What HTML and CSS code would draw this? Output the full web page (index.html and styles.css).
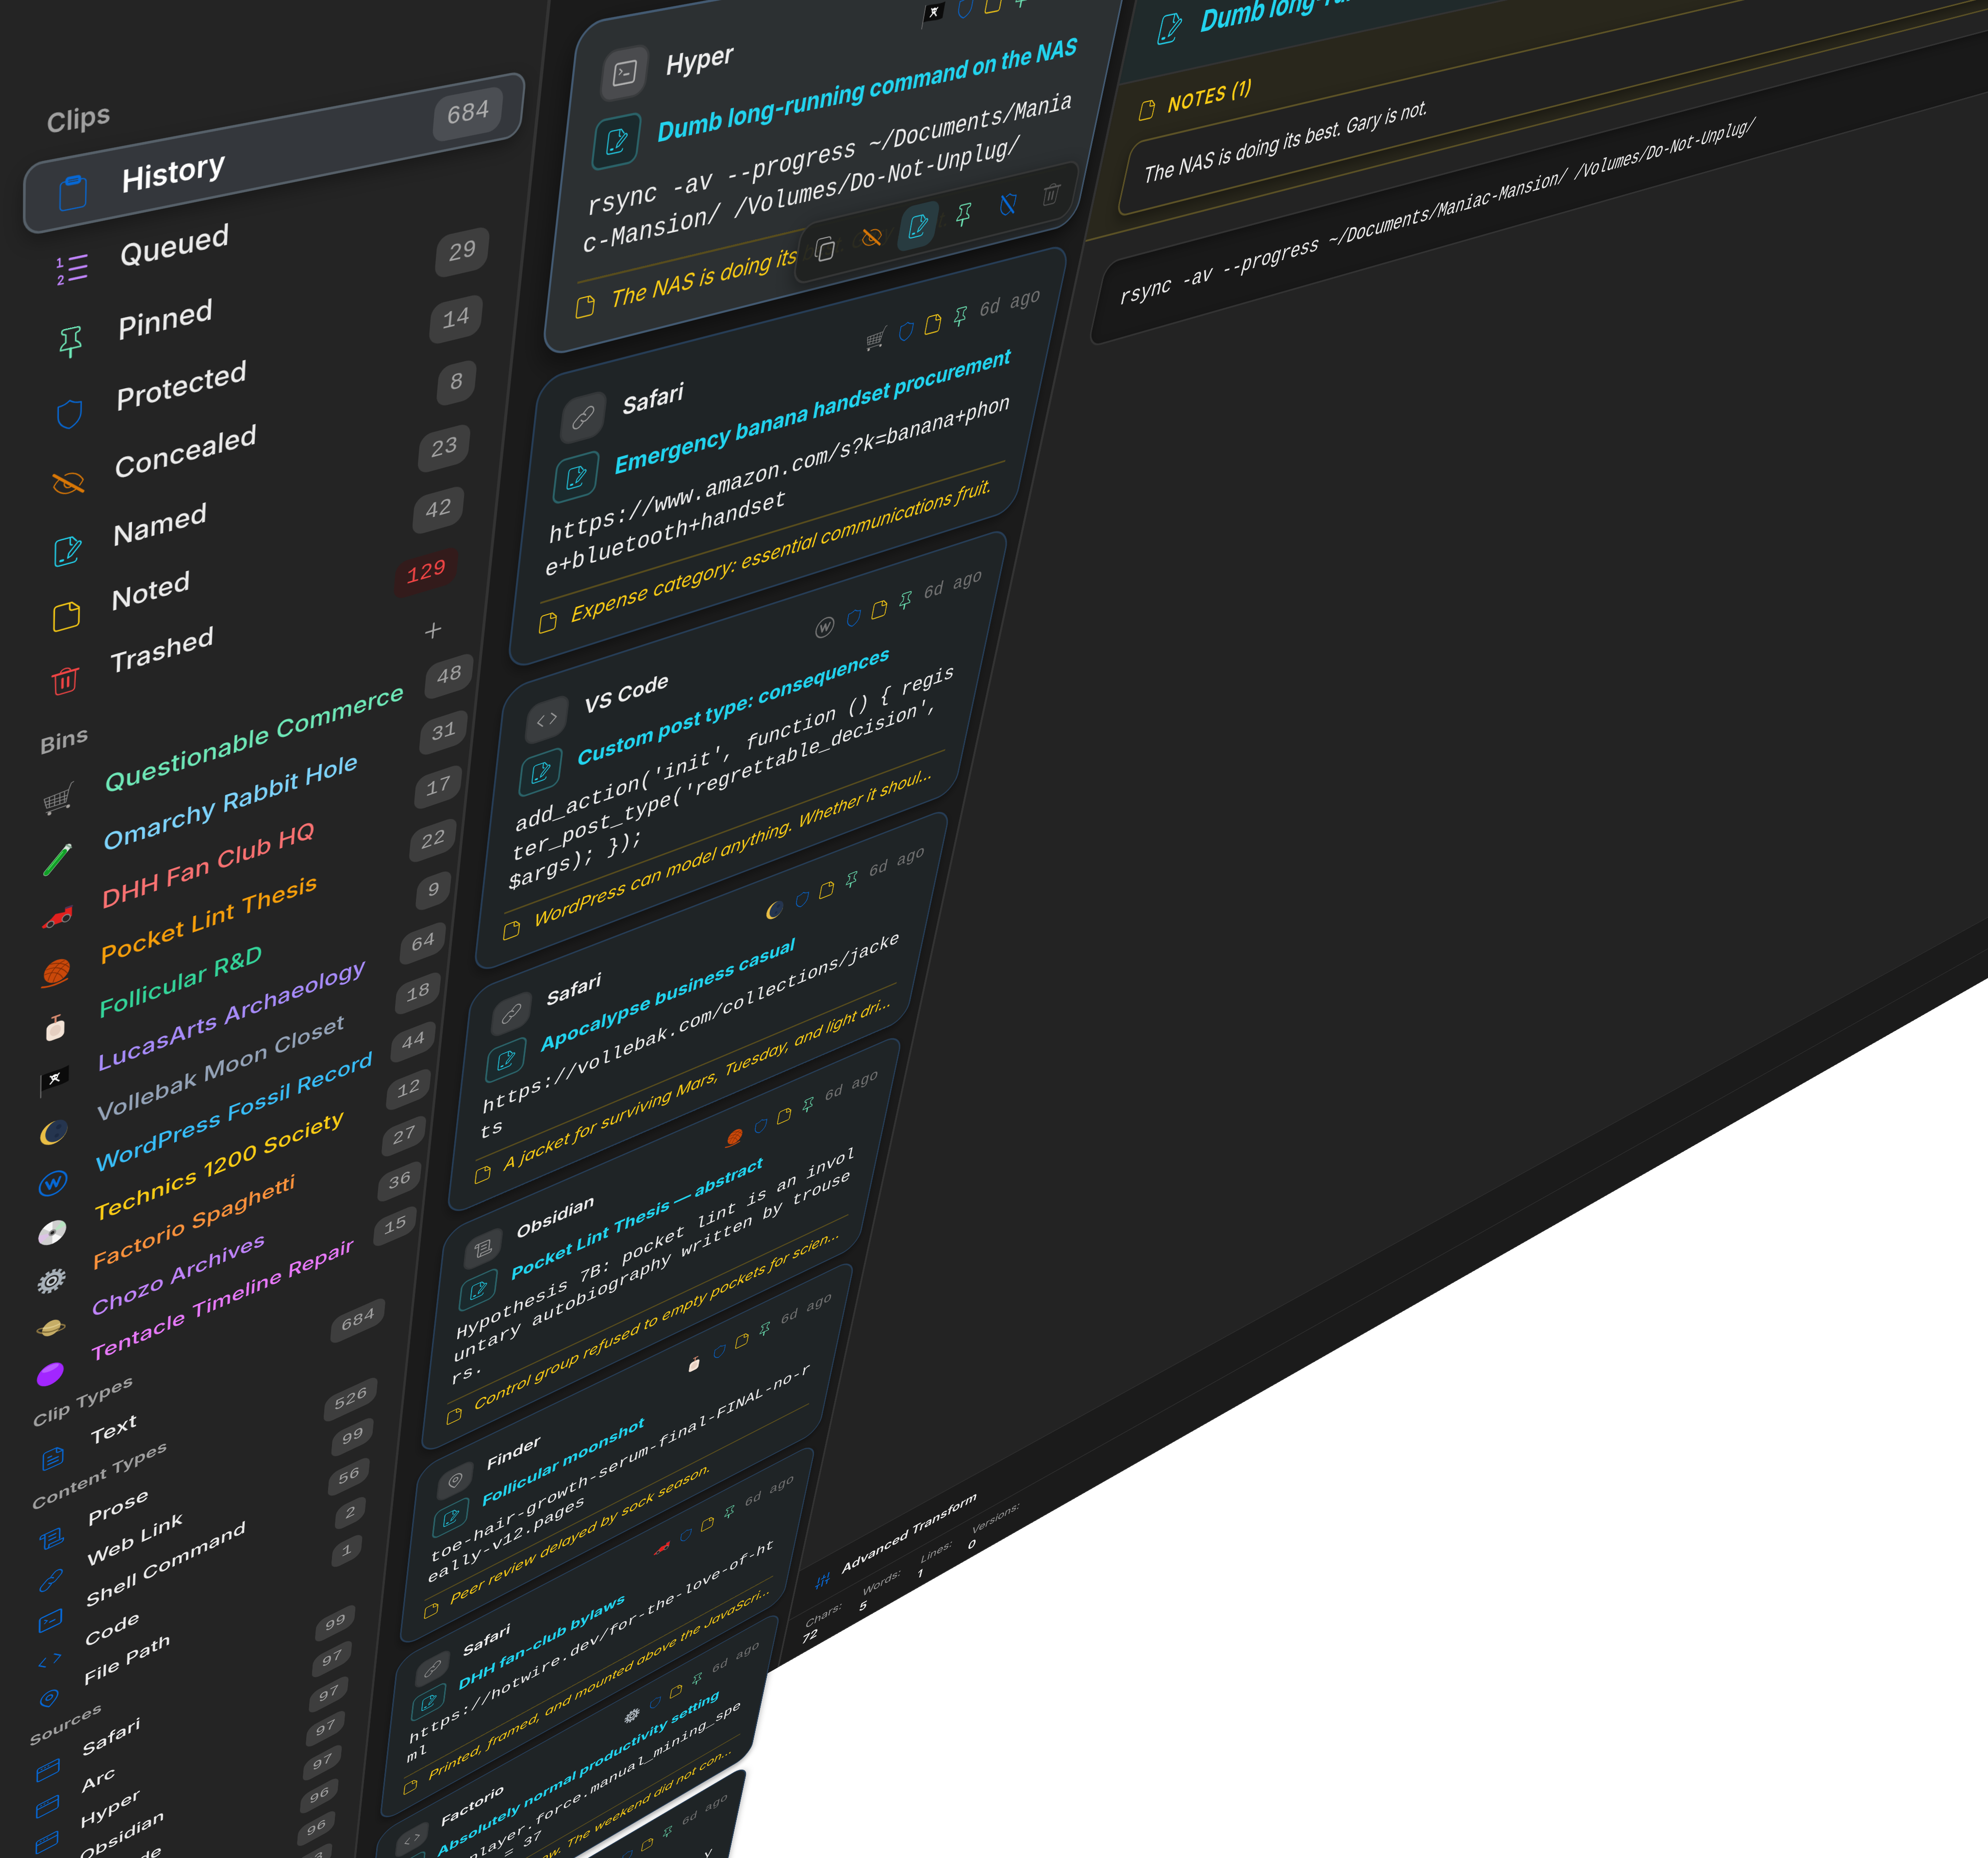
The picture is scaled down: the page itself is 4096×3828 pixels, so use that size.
FILE: index.html
```html
<!DOCTYPE html>
<html lang="en">
<head>
<meta charset="utf-8">
<title>Clipboard history</title>
<link rel="stylesheet" href="styles.css">
</head>
<body>
<svg class="defs" aria-hidden="true">
  <symbol id="clipboard" viewBox="0 0 16 16"><rect x="2.2" y="2.6" width="11.6" height="12.6" rx="1.600" stroke-width=".55"/><rect x="5.1" y="1.3" width="5.8" height="2.6" rx=".8" stroke-width="1.3"/></symbol>
  <symbol id="queue" viewBox="0 0 16 16"><path d="M7 3.2h7.6M7 8h7.6M7 12.6h7.6" stroke-width="1.1"/><path d="M2.4 5.5V2l-.9.5M1.4 5.7h2.4M2 11c.3-1.300 2.200-1.100 1.900.2-.2.9-1.500 1.700-2.100 2.600h2.300" stroke-width=".7"/></symbol>
  <symbol id="pin" viewBox="0 0 16 16"><path d="M5 1.2h6c1.6 0 1.6 2.2 0 2.3l-.7.4v3.6c1.6.8 2.4 1.8 2.4 3.2H3.3c0-1.4.8-2.4 2.4-3.2V3.9L5 3.5C3.4 3.4 3.4 1.2 5 1.2z" stroke-width=".7"/><path d="M8 10.7v4.1" stroke-width="1.2"/></symbol>
  <symbol id="shield" viewBox="0 0 16 16"><path d="M8 1.3c1.6 1.4 3.4 1.9 5.4 1.9v4.6c0 3.2-2 5.600-5.400 7-3.400-1.400-5.400-3.800-5.400-7V3.2C4.6 3.2 6.4 2.7 8 1.3z" stroke-width=".65"/></symbol>
  <symbol id="shield-off" viewBox="0 0 16 16"><path d="M5.500 2.700L8 1.300c1.600 1.400 3.400 1.900 5.400 1.900v4.600c0 .8-.1 1.500-.4 2.200M2.600 4v3.800c0 3.200 2 5.600 5.400 7 1.300-.5 2.500-1.300 3.400-2.200" stroke-width=".7"/><path d="M2 1.800l12 12.600" stroke-width="1.400"/></symbol>
  <symbol id="eye-off" viewBox="0 0 16 16"><path d="M6.300 3.500C10 2.500 13.200 4.500 15 8c-.4.900-1 1.600-1.600 2.300M3.600 4.900C2.500 5.700 1.600 6.700 1 8c2.200 4.400 6.600 5.900 10.400 4M6.300 6.800c-1.100 2 1 4 2.900 3" stroke-width=".6"/><path d="M1 2.200l14 11.600" stroke-width="1.400"/></symbol>
  <symbol id="named" viewBox="0 0 16 16"><path d="M12.400 4L10.200 1.400H4C2.700 1.400 2.200 2 2.200 3.200v9.600c0 1.200.5 1.800 1.800 1.800h6.800c1.200 0 1.800-.5 1.800-1.600M9.300 1.500v3c0 .6.400 1 1 1" stroke-width=".65"/><path d="M8.200 11.700l.5-2.300 4.200-4.600c1-.8 2.200.3 1.400 1.400L10 10.900z" stroke-width=".65"/><path d="M4.700 12.200h1.200" stroke-width="1.200"/></symbol>
  <symbol id="note" viewBox="0 0 16 16"><path d="M3.800 1.500h6.800L14.200 5v7.700c0 1.200-.5 1.800-1.700 1.800H3.800c-1.300 0-1.800-.5-1.800-1.800V3.300c0-1.300.5-1.800 1.800-1.800zM9.600 1.700v2.500c0 1 .4 1.400 1.300 1.400H14" stroke-width=".75"/></symbol>
  <symbol id="trash" viewBox="0 0 16 16"><path d="M3 3.900l.3 9.400c.1 1 .6 1.500 1.600 1.500h6.200c1 0 1.500-.5 1.600-1.500l.3-9.400M5.500 3.500C5.600 1 10.400 1 10.500 3.500" stroke-width=".65"/><path d="M1.600 3.800h12.800M6.600 6.800v4.800M9.400 6.800v4.800" stroke-width="1.200"/></symbol>
  <symbol id="link" viewBox="0 0 16 16"><path d="M7.900 4.800l2-2.100a2.800 2.800 0 0 1 4 4l-3 3a2.800 2.800 0 0 1-4.300-.4M8.100 11.200l-2 2.100a2.800 2.800 0 0 1-4-4l3-3a2.800 2.800 0 0 1 4.300.4" stroke-width=".8"/></symbol>
  <symbol id="code" viewBox="0 0 16 16"><path d="M5.200 4.200L1.200 8l4 3.800M10.800 4.200l4 3.800-4 3.800" stroke-width=".85"/></symbol>
  <symbol id="shell" viewBox="0 0 16 16"><rect x="1.300" y="2" width="13.400" height="12" rx="1.300" stroke-width="1.100"/><path d="M4.300 5.200l1.700 1.500-1.700 1.500" stroke-width=".7"/><path d="M7.600 8.800h3" stroke-width="1.100"/></symbol>
  <symbol id="scroll" viewBox="0 0 16 16"><path d="M3.800 10.500V3.300C3.800 1 .9 1 .9 3.200v1h2.700M2.500 1.700h8.700c1.200 0 1.600.6 1.600 1.700v7M6.300 11.500h8.800v.9c0 1.300-.7 1.900-1.700 1.900H5.200c-1.200 0-1.600-.8-1.500-3.800M6.300 11.500c.2 1.700-.2 2.800-1.200 2.800" stroke-width=".85"/><path d="M6.300 5h4M6.300 8h4" stroke-width="1"/></symbol>
  <symbol id="place" viewBox="0 0 16 16"><path d="M8 14.800C4.500 11.800 2.600 9.400 2.600 6.700a5.400 5.400 0 0 1 10.800 0c0 2.700-1.900 5.100-5.400 8.100z" stroke-width=".95"/><circle cx="8" cy="6.700" r="2" stroke-width=".95"/></symbol>
  <symbol id="doc" viewBox="0 0 16 16"><path d="M4 1.200h6.200L13.800 5v8c0 1.300-.5 1.800-1.700 1.800H4c-1.300 0-1.800-.5-1.800-1.800V3c0-1.300.5-1.800 1.800-1.800zM10 1.400V4c0 .9.300 1.200 1.200 1.200h2.400" stroke-width=".8"/><path d="M5 6h2M5 8.800h6M5 11.500h6" stroke-width="1"/></symbol>
  <symbol id="window" viewBox="0 0 16 16"><rect x="1" y="2" width="14" height="12" rx="1.300" stroke-width=".95"/><path d="M1.300 6h13.400M3.600 4h.3M5.800 4h.3M8 4h.3" stroke-width="1"/></symbol>
  <symbol id="copy" viewBox="0 0 16 16"><rect x="5.200" y="5" width="9.400" height="10" rx="1.500" stroke-width="1.100"/><path d="M3.400 11.600c-1.200 0-1.900-.5-1.900-1.700V2.800c0-1.200.6-1.800 1.800-1.800h6.200c1.200 0 1.900.6 1.900 1.800" stroke-width=".65"/></symbol>
  <symbol id="sliders" viewBox="0 0 16 16"><path d="M3 1.500v6M3 14.500v-4M1 10.500h4M8 1.500v3.200M6 4.700h4M8 14.500V7.500M13 1.500v5.500M13 14.500V10M11 10h4" stroke-width="1.300"/></symbol>
  <symbol id="wp" viewBox="0 0 16 16"><circle cx="8" cy="8" r="7" stroke-width="1"/><path d="M4.400 5.600l1.900 5 1.700-5 1.700 5 1.900-5" stroke-width="1.300"/></symbol>

  <symbol id="cart" viewBox="0 0 16 16" stroke="none"><path d="M1 5.200l11.700-1.100-1.300 6.300H2.300zM12.700 4.100L13.900 1l1.100-.4M2 12.700l9.400-.4M1.200 6.900h11M1.600 8.600h10.300M3.500 5v5.400M6 4.800v5.600M8.500 4.600v5.800M10.700 4.400v6" stroke="#8c8c8c" stroke-width=".42"/><circle cx="3.600" cy="13.800" r=".9" fill="#a5a19d"/><circle cx="12.500" cy="13" r=".9" fill="#a5a19d"/></symbol>
  <symbol id="tube" viewBox="0 0 16 16" stroke="none"><path d="M12.900 3L2.600 13.600" stroke="#d7e4dc" stroke-width="3.100"/><path d="M11 5L2.600 13.600" stroke="#119e27" stroke-width="2.700"/><path d="M10.300 4.900l-7 7.200" stroke="#54dd64" stroke-width=".5"/><path d="M12 1.700l2.400 2.300" stroke="#80a38b" stroke-width=".8"/></symbol>
  <symbol id="car" viewBox="0 0 16 16" stroke="none"><path d="M.5 10.700L5.200 8l2-1.900 4.700.7V4.300h3.400v6l-4 1.500-10 .2z" fill="#e1201e"/><circle cx="4.800" cy="11" r="1.700" fill="#252525" stroke="#8b8b8b" stroke-width=".5"/><circle cx="12.500" cy="10.500" r="2" fill="#252525" stroke="#8b8b8b" stroke-width=".5"/><path d="M12.300 4.700h3" stroke="#4b3357"/></symbol>
  <symbol id="yarn" viewBox="0 0 16 16" stroke="none"><circle cx="8.300" cy="7.200" r="6.400" fill="#c9480a"/><path d="M3 4.500c4-.5 8 1.500 10.500 6M2.300 7c4-.6 7.500 1.600 9 5.500M5 2c4 .5 7.500 2.500 9.300 5.500M4 11c1-4 4-8 8-8.300M6.500 13c1-4 4-7.500 7.400-8.300" stroke="#7c2a05" stroke-width=".4"/><path d="M1 13.700c4 1.500 9 1 12.500.2" stroke="#c9480a" stroke-width="1"/></symbol>
  <symbol id="lotion" viewBox="0 0 16 16" stroke="none"><rect x="3.500" y="5" width="9" height="10" rx="2.400" fill="#f3e3d6"/><ellipse cx="8" cy="9.800" rx="2.800" ry="3.100" fill="#e5cfc1"/><path d="M8 5V1.500M6.300 1.600h3.800" stroke="#d68a6f" stroke-width="1"/></symbol>
  <symbol id="flag" viewBox="0 0 16 16" stroke="none"><path d="M1.200 2.400c4-1 9 .8 14-.6v9.500c-5 1.400-10-.4-14 .5z" fill="#0b0b0b"/><path d="M1 2v13.500" stroke="#777" stroke-width=".5"/><path d="M5.800 4.600l4.400 4.600M10.200 4.600L5.800 9.200" stroke="#f0f0f0" stroke-width=".8"/><circle cx="8" cy="6" r="1.700" fill="#fff"/><circle cx="7.400" cy="6.100" r=".4" fill="#000"/><circle cx="8.700" cy="6.100" r=".4" fill="#000"/></symbol>
  <symbol id="moon" viewBox="0 0 16 16" stroke="none"><circle cx="8" cy="8" r="7" fill="#e8bd45"/><ellipse cx="9.300" cy="7.600" rx="5.700" ry="6.500" fill="#25354f"/><circle cx="10.500" cy="5.500" r="1.400" fill="#1c2a42"/><circle cx="9.500" cy="10.500" r="1.100" fill="#1c2a42"/></symbol>
  <symbol id="disc" viewBox="0 0 16 16" stroke="none"><circle cx="8" cy="8" r="7.300" fill="#cfcfcf"/><path d="M8 8L3 2.800A7.300 7.300 0 0 1 8 .7z" fill="#f6f6f6"/><path d="M8 8l5 5.200a7.300 7.300 0 0 1-5 2.100z" fill="#f6f6f6"/><path d="M8 8L.9 6.500A7.300 7.300 0 0 0 1.700 12z" fill="#dcc3e5"/><path d="M8 8l7.100-1.500A7.300 7.300 0 0 0 13 2.800z" fill="#b7e3c1"/><circle cx="8" cy="8" r="2" fill="#8f8f8f"/><circle cx="8" cy="8" r="1" fill="#242424"/></symbol>
  <symbol id="gear" viewBox="0 0 16 16" stroke="none"><circle cx="8" cy="8" r="6.600" stroke="#a9b2ba" stroke-width="1.800" stroke-dasharray="1.900 1.556" stroke-linecap="butt"/><circle cx="8" cy="8" r="4.700" stroke="#a9b2ba" stroke-width="2"/><circle cx="8" cy="8" r="2.200" stroke="#c6cdd3" stroke-width="1.300"/></symbol>
  <symbol id="planet" viewBox="0 0 16 16" stroke="none"><path d="M3.800 5.800C-2 3.500.3 8.800 8 11c8 2.200 10 0 4.800-3" stroke="#8a7340" stroke-width=".9"/><circle cx="8.200" cy="8" r="5" fill="#c6ad66"/><path d="M4 5.900c3 1.700 6 2 8.700 1.700" stroke="#ddc98a" stroke-width=".9"/><path d="M3.500 8.200c3 2.200 6.200 2.800 9.200 2.200" stroke="#7e6a36" stroke-width=".8"/></symbol>
  <symbol id="orb" viewBox="0 0 16 16" stroke="none"><circle cx="8" cy="8" r="7.300" fill="#a226ff"/><ellipse cx="8" cy="3.600" rx="4.600" ry="2" fill="#b85aff"/></symbol>
</svg>

<div class="stage">
 <div class="plane">
  <div class="window">

   <nav class="sidebar">
    <section class="group">
     <div class="group-head"><h2>Clips</h2></div>
     <a class="row active"><svg class="ico blue"><use href="#clipboard"/></svg><span>History</span><b class="count">684</b></a>
     <a class="row"><svg class="ico purple"><use href="#queue"/></svg><span>Queued</span></a>
     <a class="row"><svg class="ico mint"><use href="#pin"/></svg><span>Pinned</span><b class="count">29</b></a>
     <a class="row"><svg class="ico blue"><use href="#shield"/></svg><span>Protected</span><b class="count">14</b></a>
     <a class="row"><svg class="ico orange"><use href="#eye-off"/></svg><span>Concealed</span><b class="count">8</b></a>
     <a class="row"><svg class="ico cyan"><use href="#named"/></svg><span>Named</span><b class="count">23</b></a>
     <a class="row"><svg class="ico yellow"><use href="#note"/></svg><span>Noted</span><b class="count">42</b></a>
     <a class="row"><svg class="ico red"><use href="#trash"/></svg><span>Trashed</span><b class="count danger">129</b></a>
    </section>
    <section class="group bins">
     <div class="group-head"><h2>Bins</h2><svg class="plus" viewBox="0 0 10 10"><path d="M5 1v8M1 5h8"/></svg></div>
     <a class="row c-mint"><svg class="ico"><use href="#cart"/></svg><span>Questionable Commerce</span><b class="count">48</b></a>
     <a class="row c-sky"><svg class="ico"><use href="#tube"/></svg><span>Omarchy Rabbit Hole</span><b class="count">31</b></a>
     <a class="row c-rose"><svg class="ico"><use href="#car"/></svg><span>DHH Fan Club HQ</span><b class="count">17</b></a>
     <a class="row c-amber"><svg class="ico"><use href="#yarn"/></svg><span>Pocket Lint Thesis</span><b class="count">22</b></a>
     <a class="row c-green"><svg class="ico"><use href="#lotion"/></svg><span>Follicular R&amp;D</span><b class="count">9</b></a>
     <a class="row c-violet"><svg class="ico"><use href="#flag"/></svg><span>LucasArts Archaeology</span><b class="count">64</b></a>
     <a class="row c-slate"><svg class="ico"><use href="#moon"/></svg><span>Vollebak Moon Closet</span><b class="count">18</b></a>
     <a class="row c-blue"><svg class="ico blue"><use href="#wp"/></svg><span>WordPress Fossil Record</span><b class="count">44</b></a>
     <a class="row c-yellow"><svg class="ico"><use href="#disc"/></svg><span>Technics 1200 Society</span><b class="count">12</b></a>
     <a class="row c-orange"><svg class="ico"><use href="#gear"/></svg><span>Factorio Spaghetti</span><b class="count">27</b></a>
     <a class="row c-purple"><svg class="ico"><use href="#planet"/></svg><span>Chozo Archives</span><b class="count">36</b></a>
     <a class="row c-pink"><svg class="ico"><use href="#orb"/></svg><span>Tentacle Timeline Repair</span><b class="count">15</b></a>
    </section>
    <section class="group">
     <div class="group-head"><h2>Clip Types</h2></div>
     <a class="row"><svg class="ico blue"><use href="#doc"/></svg><span>Text</span><b class="count">684</b></a>
    </section>
    <section class="group">
     <div class="group-head"><h2>Content Types</h2></div>
     <a class="row"><svg class="ico blue"><use href="#scroll"/></svg><span>Prose</span><b class="count">526</b></a>
     <a class="row"><svg class="ico blue"><use href="#link"/></svg><span>Web Link</span><b class="count">99</b></a>
     <a class="row"><svg class="ico blue"><use href="#shell"/></svg><span>Shell Command</span><b class="count">56</b></a>
     <a class="row"><svg class="ico blue"><use href="#code"/></svg><span>Code</span><b class="count">2</b></a>
     <a class="row"><svg class="ico blue"><use href="#place"/></svg><span>File Path</span><b class="count">1</b></a>
    </section>
    <section class="group">
     <div class="group-head"><h2>Sources</h2></div>
     <a class="row"><svg class="ico blue"><use href="#window"/></svg><span>Safari</span><b class="count">99</b></a>
     <a class="row"><svg class="ico blue"><use href="#window"/></svg><span>Arc</span><b class="count">97</b></a>
     <a class="row"><svg class="ico blue"><use href="#window"/></svg><span>Hyper</span><b class="count">97</b></a>
     <a class="row"><svg class="ico blue"><use href="#window"/></svg><span>Obsidian</span><b class="count">97</b></a>
     <a class="row"><svg class="ico blue"><use href="#window"/></svg><span>VS Code</span><b class="count">97</b></a>
     <a class="row"><svg class="ico"></svg><span></span><b class="count">96</b></a>
     <a class="row"><svg class="ico"></svg><span></span><b class="count">96</b></a>
     <a class="row"><svg class="ico"></svg><span></span><b class="count">93</b></a>
    </section>
   </nav>

   <main class="list">
    <article class="card selected">
     <header><i class="tile"><svg><use href="#shell"/></svg></i><h3>Hyper</h3><div class="meta"><svg class="emoji"><use href="#flag"/></svg><svg class="blue"><use href="#shield"/></svg><svg class="yellow"><use href="#note"/></svg><svg class="mint"><use href="#pin"/></svg><time></time></div></header>
     <div class="title"><i class="tile named"><svg><use href="#named"/></svg></i><h4>Dumb long-running command on the NAS</h4></div>
     <pre>rsync -av --progress ~/Documents/Mania
c-Mansion/ /Volumes/Do-Not-Unplug/</pre>
     <footer><svg><use href="#note"/></svg><em>The NAS is doing its best. Gary is not.</em></footer>
     <div class="toolbar">
      <button><svg class="grey"><use href="#copy"/></svg></button>
      <button><svg class="orange"><use href="#eye-off"/></svg></button>
      <button class="on"><svg class="cyan"><use href="#named"/></svg></button>
      <button><svg class="mint"><use href="#pin"/></svg></button>
      <button><svg class="blue"><use href="#shield-off"/></svg></button>
      <button><svg class="dim"><use href="#trash"/></svg></button>
     </div>
    </article>
    <article class="card">
     <header><i class="tile"><svg><use href="#link"/></svg></i><h3>Safari</h3><div class="meta"><svg class="emoji"><use href="#cart"/></svg><svg class="blue"><use href="#shield"/></svg><svg class="yellow"><use href="#note"/></svg><svg class="mint"><use href="#pin"/></svg><time>6d ago</time></div></header>
     <div class="title"><i class="tile named"><svg><use href="#named"/></svg></i><h4>Emergency banana handset procurement</h4></div>
     <pre>https://www.amazon.com/s?k=banana+phon
e+bluetooth+handset</pre>
     <footer><svg><use href="#note"/></svg><em>Expense category: essential communications fruit.</em></footer>
    </article>
    <article class="card">
     <header><i class="tile"><svg><use href="#code"/></svg></i><h3>VS Code</h3><div class="meta"><svg class="emoji mute"><use href="#wp"/></svg><svg class="blue"><use href="#shield"/></svg><svg class="yellow"><use href="#note"/></svg><svg class="mint"><use href="#pin"/></svg><time>6d ago</time></div></header>
     <div class="title"><i class="tile named"><svg><use href="#named"/></svg></i><h4>Custom post type: consequences</h4></div>
     <pre>add_action('init', function () { regis
ter_post_type('regrettable_decision',
$args); });</pre>
     <footer><svg><use href="#note"/></svg><em>WordPress can model anything. Whether it shoul…</em></footer>
    </article>
    <article class="card">
     <header><i class="tile"><svg><use href="#link"/></svg></i><h3>Safari</h3><div class="meta"><svg class="emoji"><use href="#moon"/></svg><svg class="blue"><use href="#shield"/></svg><svg class="yellow"><use href="#note"/></svg><svg class="mint"><use href="#pin"/></svg><time>6d ago</time></div></header>
     <div class="title"><i class="tile named"><svg><use href="#named"/></svg></i><h4>Apocalypse business casual</h4></div>
     <pre>https://vollebak.com/collections/jacke
ts</pre>
     <footer><svg><use href="#note"/></svg><em>A jacket for surviving Mars, Tuesday, and light dri…</em></footer>
    </article>
    <article class="card">
     <header><i class="tile"><svg><use href="#scroll"/></svg></i><h3>Obsidian</h3><div class="meta"><svg class="emoji"><use href="#yarn"/></svg><svg class="blue"><use href="#shield"/></svg><svg class="yellow"><use href="#note"/></svg><svg class="mint"><use href="#pin"/></svg><time>6d ago</time></div></header>
     <div class="title"><i class="tile named"><svg><use href="#named"/></svg></i><h4>Pocket Lint Thesis — abstract</h4></div>
     <pre>Hypothesis 7B: pocket lint is an invol
untary autobiography written by trouse
rs.</pre>
     <footer><svg><use href="#note"/></svg><em>Control group refused to empty pockets for scien…</em></footer>
    </article>
    <article class="card">
     <header><i class="tile"><svg><use href="#place"/></svg></i><h3>Finder</h3><div class="meta"><svg class="emoji"><use href="#lotion"/></svg><svg class="blue"><use href="#shield"/></svg><svg class="yellow"><use href="#note"/></svg><svg class="mint"><use href="#pin"/></svg><time>6d ago</time></div></header>
     <div class="title"><i class="tile named"><svg><use href="#named"/></svg></i><h4>Follicular moonshot</h4></div>
     <pre>toe-hair-growth-serum-final-FINAL-no-r
eally-v12.pages</pre>
     <footer><svg><use href="#note"/></svg><em>Peer review delayed by sock season.</em></footer>
    </article>
    <article class="card">
     <header><i class="tile"><svg><use href="#link"/></svg></i><h3>Safari</h3><div class="meta"><svg class="emoji"><use href="#car"/></svg><svg class="blue"><use href="#shield"/></svg><svg class="yellow"><use href="#note"/></svg><svg class="mint"><use href="#pin"/></svg><time>6d ago</time></div></header>
     <div class="title"><i class="tile named"><svg><use href="#named"/></svg></i><h4>DHH fan-club bylaws</h4></div>
     <pre>https://hotwire.dev/for-the-love-of-ht
ml</pre>
     <footer><svg><use href="#note"/></svg><em>Printed, framed, and mounted above the JavaScri…</em></footer>
    </article>
    <article class="card">
     <header><i class="tile"><svg><use href="#code"/></svg></i><h3>Factorio</h3><div class="meta"><svg class="emoji"><use href="#gear"/></svg><svg class="blue"><use href="#shield"/></svg><svg class="yellow"><use href="#note"/></svg><svg class="mint"><use href="#pin"/></svg><time>6d ago</time></div></header>
     <div class="title"><i class="tile named"><svg><use href="#named"/></svg></i><h4>Absolutely normal productivity setting</h4></div>
     <pre>/c game.player.force.manual_mining_spe
ed_modifier = 37</pre>
     <footer><svg><use href="#note"/></svg><em>The factory must grow. The weekend did not con…</em></footer>
    </article>
    <article class="card last">
     <header><div class="meta"><svg class="blue"><use href="#shield"/></svg><svg class="yellow"><use href="#note"/></svg><svg class="mint"><use href="#pin"/></svg><time>6d ago</time></div></header>
     <pre>y</pre>
    </article>
   </main>

   <section class="detail">
    <header class="detail-head"><svg class="cyan"><use href="#named"/></svg><h1>Dumb long-running command on the NAS</h1></header>
    <div class="notes">
     <div class="notes-label"><svg class="yellow"><use href="#note"/></svg><span>NOTES (1)</span></div>
     <p class="note-box">The NAS is doing its best. Gary is not.</p>
    </div>
    <pre class="code-box">rsync -av --progress ~/Documents/Maniac-Mansion/ /Volumes/Do-Not-Unplug/</pre>
    <div class="bars">
     <div class="transform-bar"><svg class="blue"><use href="#sliders"/></svg><span>Advanced Transform</span></div>
     <dl class="stats">
      <div><dt>Chars:</dt><dd>72</dd></div>
      <div><dt>Words:</dt><dd>5</dd></div>
      <div><dt>Lines:</dt><dd>1</dd></div>
      <div><dt>Versions:</dt><dd>0</dd></div>
     </dl>
    </div>
   </section>

  </div>
 </div>
</div>
</body>
</html>
```
FILE: styles.css
```css
* { box-sizing: border-box; margin: 0; padding: 0; }
html, body { background: #fff; overflow: hidden; }
body { font-family: Inter, "Liberation Sans", sans-serif; color: #ededed; }
.defs { display: none; }
svg { fill: none; stroke: currentColor; stroke-linecap: round; stroke-linejoin: round; flex: none; display: block; }

.stage { width: 4096px; height: 3828px; overflow: hidden; }

/* tilts the whole window away from the viewer */
.plane {
  width: 8000px;
  height: 4860px;
  transform-origin: 0 0;
  transform: matrix3d(1.434016, -0.222021, 0, 0.0001368106, -0.0022704, 1.486402, 0, 0.0001353752, 0, 0, 1, 0, 0, 0, 0, 1);
}
.window { zoom: 3.644; display: flex; width: 2190px; height: 1331.2px; background: #1b1b1b; }

.blue { color: #0668d6; }
.purple { color: #c084fc; }
.mint { color: #6ee7b7; }
.orange { color: #d97706; }
.cyan { color: #22d3ee; }
.yellow { color: #facc15; }
.red { color: #ef4444; }
.grey { color: #a3a3a3; }
.mute { color: #747474; }
.dim { color: #575757; }

/* sidebar */
.sidebar { width: 248px; height: 1331.2px; flex: none; overflow: hidden; background: #242424; border-right: 1.65px solid #333; padding: 37px 0 0 9.7px; }
.group-head { display: flex; align-items: center; justify-content: space-between; width: 204.4px; height: 14px; margin: 7.7px 0 8.8px 9.4px; }
.group:first-child .group-head { margin-bottom: 7.6px; }
.bins .group-head { margin-top: 9.9px; }
.group-head h2 { font-size: 11px; line-height: 14px; font-weight: 600; color: #a0a0a0; }
.plus { width: 10px; height: 10px; color: #a8a8a8; stroke-width: .9; margin-top: 3px; }
.row { display: flex; align-items: center; width: 229.9px; height: 30px; padding: 0 10px 0 12px; border: 1.1px solid transparent; border-radius: 8px; font-size: 13px; font-weight: 500; color: #ebebeb; white-space: nowrap; }
.row + .row { margin-top: 2px; }
.row span { flex: 1; margin-left: 11.6px; }
.row .ico { width: 15px; height: 15px; margin: 2.2px 1.7px 0 .2px; }
.row.active { background: #34373c; border-color: #566069; color: #fff; font-weight: 600; box-shadow: 0 3px 8px rgba(0,0,0,.3); }
.row.active .ico { margin-top: 1.4px; }
.count { min-width: 20px; height: 20px; padding: 0 6.2px; border-radius: 6px; background: #3e3e3e; color: #a1a1a1; font: 500 11.9px/20px "Liberation Mono", monospace; text-align: center; }
.active .count { background: #4b4e53; color: #adadad; }
.count.danger { background: #331b1b; color: #ef4444; }
.bins .row { width: 244.9px; padding-left: 9.5px; font-size: 13.1px; }
.bins .row .ico { width: 16px; height: 16px; margin: .4px 2.5px 0 0; }
.bins .c-mint { color: #6ee7b7; }
.bins .c-sky { color: #7dd3fc; }
.bins .c-rose { color: #f87171; }
.bins .c-amber { color: #f59e0b; }
.bins .c-green { color: #34d399; }
.bins .c-violet { color: #a78bfa; }
.bins .c-slate { color: #94a3b8; }
.bins .c-blue { color: #38bdf8; }
.bins .c-yellow { color: #facc15; }
.bins .c-orange { color: #fb923c; }
.bins .c-purple { color: #c084fc; }
.bins .c-pink { color: #e879f9; }

/* clip list */
.list { display: flex; flex-direction: column; gap: 10px; width: 353.8px; height: 1331.2px; flex: none; padding: 49.6px 8.8px 0 15.5px; background: #1b1b1b; }
.card { position: relative; flex: none; width: 329.5px; padding: 13.9px 13.9px 13.9px 14.4px; background: #1f2426; border: 1.1px solid #263d56; border-radius: 14px; box-shadow: 0 3px 7px rgba(0,0,0,.35); }
.card.selected { background: #2c3032; border-color: #435a72; box-shadow: 0 5px 14px rgba(0,0,0,.5); }
.card header { display: flex; align-items: center; height: 24px; margin-bottom: 7.5px; }
.title { display: flex; align-items: center; height: 24px; margin-bottom: 8.5px; }
.tile { display: flex; align-items: center; justify-content: center; width: 25px; height: 24px; flex: none; margin-right: 10px; border: 1.1px solid #333638; border-radius: 7px; background: #3a3d3f; color: #9c9c9c; }
.selected .tile { background: #4a4b4e; border-color: #3a3c3e; color: #b0b0b0; }
.tile svg { width: 13px; height: 13px; }
.tile.named, .selected .tile.named { border-radius: 5px; background: #1a2a2d; border-color: #2a6268; color: #22d3ee; }
.card h3 { flex: 1; font-size: 12.5px; font-weight: 600; color: #ededed; }
.meta { display: flex; align-items: center; gap: 6px; }
.meta svg { width: 12px; height: 12px; }
.meta .emoji { width: 13.5px; height: 13.5px; margin-right: .7px; }
.meta time { width: 41.5px; height: 16px; font: 11.5px/16px "Liberation Mono", monospace; letter-spacing: .1px; color: #727272; margin-left: 1px; white-space: nowrap; }
.card h4 { font-size: 12.5px; font-weight: 700; color: #22d3ee; white-space: nowrap; }
pre { font: 13px/18.2px "Liberation Mono", monospace; letter-spacing: -.1px; color: #ededed; white-space: pre; }
.card pre { padding-left: .7px; }
.card footer { display: flex; align-items: center; gap: 8px; height: 19.8px; margin-top: 8px; padding-top: 6px; border-top: 1.1px solid #574c1d; color: #facc15; }
.card footer svg { width: 12px; height: 12px; }
.card footer em { font-size: 11.4px; line-height: 14px; font-style: italic; font-weight: 450; white-space: nowrap; }
.card.last { height: 158px; }
.last header { justify-content: flex-end; margin-bottom: 40px; }
.last pre { text-align: right; padding-right: 4px; }

.toolbar { position: absolute; right: 3.8px; bottom: 3.8px; display: flex; gap: 5.4px; padding: 3px 4px; border: 1.1px solid #353636; border-radius: 9px; background: rgba(32,34,33,.95); box-shadow: 0 3px 10px rgba(0,0,0,.4); }
.toolbar button { display: flex; align-items: center; justify-content: center; width: 24px; height: 24px; border: 0; border-radius: 6px; background: none; }
.toolbar .on { background: #283b40; }
.toolbar svg { width: 13.5px; height: 13.5px; }

/* detail pane */
.detail { display: flex; flex-direction: column; flex: 1; background: #232323; border-left: 1.65px solid #333; }
.detail-head { display: flex; align-items: flex-end; height: 134.8px; padding: 0 0 12.5px 19px; border-bottom: 1.1px solid #333; background: #202a2b; }
.detail-head svg { width: 18px; height: 18px; margin: 0 13.5px 3px 0; }
.detail-head h1 { font-size: 16px; line-height: 24px; font-weight: 700; color: #22d3ee; white-space: nowrap; }
.notes { padding: 9.1px 19px 8.5px 18.6px; border-bottom: 1.1px solid #5c5226; background: #29271c; }
.notes-label { display: flex; align-items: center; gap: 9.3px; height: 16px; font-size: 11.3px; font-weight: 600; letter-spacing: .75px; color: #facc15; }
.notes-label svg { width: 12px; height: 12px; }
.note-box { height: 41.6px; margin-top: 8.7px; padding: 11px 13.4px; border: 1.1px solid #5c5226; border-radius: 8px; background: #212121; box-shadow: 0 3px 8px rgba(0,0,0,.35); font-size: 12.35px; line-height: 18px; color: #ededed; }
.code-box { height: 50.2px; margin: 15.4px 19px 0 18.6px; padding: 15px 16.3px; border: 1.1px solid #333; border-radius: 10px; background: #191919; box-shadow: inset 0 2px 6px rgba(0,0,0,.3); letter-spacing: -.13px; }
.bars { margin-top: auto; background: #1b1b1b; border-bottom: 1.1px solid #333; }
.transform-bar { display: flex; align-items: center; height: 51.6px; gap: 10.5px; padding: 2px 0 0 19px; border-top: 1.1px solid #2d2d2d; font-size: 12.6px; font-weight: 600; }
.transform-bar svg { width: 14px; height: 14px; }
.stats { display: flex; gap: 19px; height: 49px; padding: 8.5px 0 0 18.2px; border-top: 1.1px solid #2d2d2d; font-size: 11px; line-height: 16.4px; }
.stats dt { color: #9a9a9a; }
.stats dd { font-size: 12px; font-weight: 600; color: #f0f0f0; }
```
